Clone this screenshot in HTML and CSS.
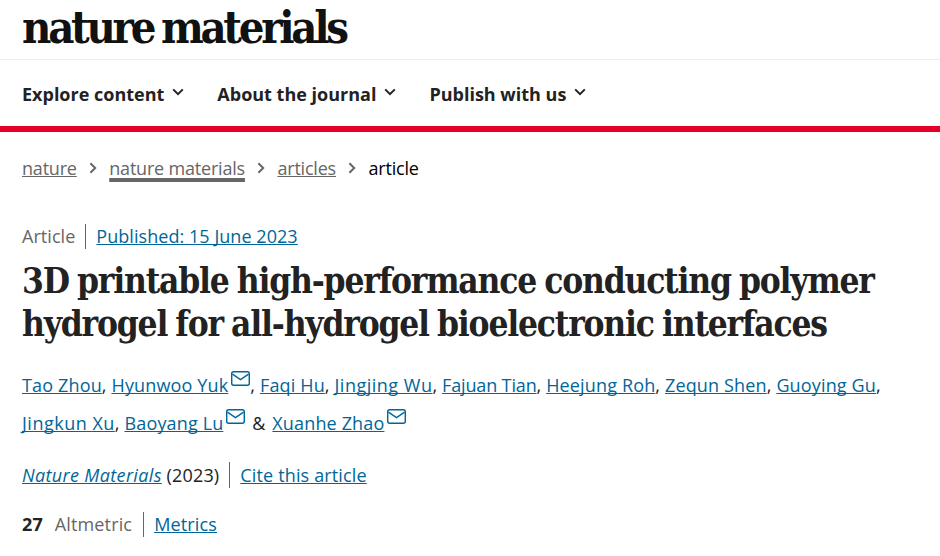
FILE: index.html
```html
<!DOCTYPE html>
<html lang="en">
<head>
    <meta charset="UTF-8">
    <title>3D printable high-performance conducting polymer hydrogel - Nature Materials</title>
    <link rel="stylesheet" href="styles.css">
</head>
<body>
    <header class="masthead">
        <a class="logo" href="#">nature materials</a>
    </header>

    <nav class="main-nav">
        <a href="#">Explore content <svg class="caret" viewBox="0 0 12 8"><path d="M1.2 1.4 6 6.2l4.8-4.8"/></svg></a>
        <a href="#">About the journal <svg class="caret" viewBox="0 0 12 8"><path d="M1.2 1.4 6 6.2l4.8-4.8"/></svg></a>
        <a href="#">Publish with us <svg class="caret" viewBox="0 0 12 8"><path d="M1.2 1.4 6 6.2l4.8-4.8"/></svg></a>
    </nav>

    <ol class="breadcrumbs">
        <li><a href="#">nature</a><svg class="sep" viewBox="0 0 8 12"><path d="M1.4 1.2 6.2 6l-4.8 4.8"/></svg></li>
        <li><a class="active" href="#">nature materials</a><svg class="sep" viewBox="0 0 8 12"><path d="M1.4 1.2 6.2 6l-4.8 4.8"/></svg></li>
        <li><a href="#">articles</a><svg class="sep" viewBox="0 0 8 12"><path d="M1.4 1.2 6.2 6l-4.8 4.8"/></svg></li>
        <li class="current">article</li>
    </ol>

    <main class="article">
        <ul class="meta-row type-row">
            <li class="muted">Article</li>
            <li><a href="#">Published: 15 June 2023</a></li>
        </ul>

        <h1>3D printable high-performance conducting polymer hydrogel for all-hydrogel bioelectronic interfaces</h1>

        <p class="authors">
            <a href="#">Tao Zhou</a>, <a href="#">Hyunwoo Yuk</a><svg class="mail" viewBox="0 0 20 15" preserveAspectRatio="none"><rect x="0.75" y="0.75" width="18.5" height="13.5" rx="2"/><path d="M1.5 3.2 10 8.6l8.5-5.4"/></svg>, <a href="#">Faqi Hu</a>, <a class="wide" href="#">Jingjing Wu</a>, <a class="tight" href="#">Fajuan Tian</a>, <a href="#">Heejung Roh</a>, <a href="#">Zequn Shen</a>, <a href="#">Guoying Gu</a>,<br>
            <a class="wide" href="#">Jingkun Xu</a>, <a href="#">Baoyang Lu</a><svg class="mail" viewBox="0 0 20 15" preserveAspectRatio="none"><rect x="0.75" y="0.75" width="18.5" height="13.5" rx="2"/><path d="M1.5 3.2 10 8.6l8.5-5.4"/></svg> <span class="amp">&amp;</span> <a href="#">Xuanhe Zhao</a><svg class="mail" viewBox="0 0 20 15" preserveAspectRatio="none"><rect x="0.75" y="0.75" width="18.5" height="13.5" rx="2"/><path d="M1.5 3.2 10 8.6l8.5-5.4"/></svg>
        </p>

        <ul class="meta-row journal-row">
            <li><a href="#"><i>Nature Materials</i></a> (2023)</li>
            <li><a href="#">Cite this article</a></li>
        </ul>

        <ul class="meta-row metrics-row">
            <li class="muted"><b>27</b> Altmetric</li>
            <li><a href="#">Metrics</a></li>
        </ul>
    </main>
</body>
</html>
```

FILE: styles.css
```css
body {
    margin: 0;
    background: #fff;
    color: #222;
    font-family: "Open Sans", "Noto Sans", Arial, sans-serif;
    font-size: 18px;
    overflow: hidden;
}

a {
    color: #006699;
    text-decoration-skip-ink: none;
}

ul, ol {
    list-style: none;
    margin: 0;
    padding: 0;
}

.masthead {
    height: 59px;
    padding-left: 22px;
    border-bottom: 1px solid #eee;
    overflow: hidden;
}

.logo {
    display: block;
    color: #111;
    font-family: "DejaVu Serif", serif;
    font-stretch: condensed;
    font-size: 45px;
    font-weight: bold;
    line-height: 56px;
    letter-spacing: -3.3px;
    word-spacing: -3px;
    text-decoration: none;
}

.main-nav {
    display: flex;
    gap: 33px;
    align-items: center;
    padding: 2px 0 0 22px;
    box-sizing: border-box;
    height: 72px;
    border-bottom: 6px solid #e4002b;
}

.main-nav a {
    display: flex;
    align-items: center;
    gap: 8px;
    color: #222;
    font-weight: 700;
    text-decoration: none;
}

.caret {
    width: 12px;
    height: 8px;
    margin-top: -4px;
}

.caret path, .sep path {
    fill: none;
    stroke: #222;
    stroke-width: 2;
}

.breadcrumbs {
    display: flex;
    align-items: center;
    height: 26px;
    margin-top: 23px;
    padding-left: 22px;
    letter-spacing: -0.2px;
}

.breadcrumbs li {
    display: flex;
    align-items: center;
}

.breadcrumbs a {
    color: #666;
}

.breadcrumbs a.active {
    text-decoration-thickness: 4px;
    text-underline-offset: 3px;
}

.breadcrumbs .current {
    color: #000;
}

.sep {
    width: 8px;
    height: 12px;
    margin: 0 12.5px 0 12px;
}

.sep path {
    stroke: #666;
}

.article {
    padding: 0 22px;
    letter-spacing: 0.15px;
}

.meta-row {
    display: flex;
    align-items: center;
}

.meta-row li + li {
    margin-left: 10px;
    padding-left: 10px;
    border-left: 1px solid #666;
}

.muted {
    color: #666;
}

.muted b {
    color: #222;
    margin-right: 7px;
}

.type-row {
    margin-top: 43px;
    line-height: 25px;
    letter-spacing: 0.05px;
}

h1 {
    margin: 10px 0 0;
    color: #222;
    font-family: "DejaVu Serif", serif;
    font-stretch: condensed;
    font-size: 35px;
    font-weight: bold;
    line-height: 43px;
    letter-spacing: -1.2px;
    word-spacing: -1.6px;
}

.authors {
    margin: 21px 0 0;
    line-height: 38px;
}

.authors .wide {
    letter-spacing: 0.5px;
}

.authors .tight {
    letter-spacing: -0.15px;
}

.amp {
    margin: 0 2px;
}

.mail {
    width: 19px;
    height: 15px;
    margin-left: 3px;
    vertical-align: 6px;
}

.mail rect, .mail path {
    fill: none;
    stroke: #006699;
    stroke-width: 1.5;
}

.journal-row {
    margin-top: 20px;
    line-height: 26px;
}

.journal-row i {
    letter-spacing: 0.35px;
}

.metrics-row {
    margin-top: 24px;
    line-height: 25px;
}

.metrics-row li + li {
    margin-left: 11px;
}
```
